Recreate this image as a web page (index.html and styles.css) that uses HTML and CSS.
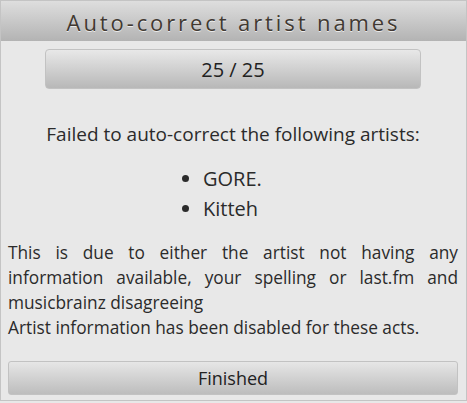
FILE: index.html
```html
<!DOCTYPE html>
<html>
<head>
<meta charset="utf-8">
<link rel="stylesheet" href="styles.css">
</head>
<body>
<div class="window">
  <div class="header">Auto-correct artist names</div>
  <div class="content">
    <div class="progress">25 / 25</div>
    <div class="failed">Failed to auto-correct the following artists:</div>
    <ul class="artists">
      <li>GORE.</li>
      <li>Kitteh</li>
    </ul>
    <p class="info">This is due to either the artist not having any information available, your spelling or last.fm and musicbrainz disagreeing<br>Artist information has been disabled for these acts.</p>
    <div class="spacer"></div>
    <div class="finished">Finished</div>
  </div>
</div>
</body>
</html>
```
FILE: styles.css
```css
html, body {
  margin: 0;
  padding: 0;
  background: #e8e8e8;
}
body {
  font-family: "Open Sans", "Noto Sans", sans-serif;
  color: #2b2b2b;
}
.window {
  width: 467px;
  height: 401px;
  box-sizing: border-box;
  border: 1px solid #c4c4c4;
  display: flex;
  flex-direction: column;
  background: #e8e8e8;
}
.header {
  height: 40px;
  flex: none;
  background: linear-gradient(#dedede, #b3b3b3);
  text-align: center;
  font-size: 22px;
  font-weight: 500;
  line-height: 42px;
  letter-spacing: 2.9px;
  color: #413932;
  text-shadow: 0 1px 0 rgba(255,255,255,0.7);
}
.content {
  flex: 1;
  display: flex;
  flex-direction: column;
  padding: 8px 8px 5px 7px;
}
.progress {
  margin: 0 37px;
  height: 38px;
  border: 1px solid #c2c2c2;
  border-radius: 4px;
  background: linear-gradient(#e8e8e8, #b8b8b8);
  text-align: center;
  font-size: 20px;
  line-height: 39px;
  color: #222;
}
.failed {
  margin-top: 32px;
  text-align: center;
  font-size: 19px;
  line-height: 26px;
}
.artists {
  margin: 17px 0 0 0;
  padding: 0 0 0 195px;
  font-size: 20px;
  line-height: 30px;
}
.info {
  margin: 16px 0 0 0;
  text-align: justify;
  font-size: 17.3px;
  line-height: 25px;
}
.spacer { flex: 1; }
.finished {
  height: 32px;
  border: 1px solid #c2c2c2;
  border-radius: 3px;
  background: linear-gradient(#e6e6e6, #bdbdbd);
  text-align: center;
  font-size: 18px;
  line-height: 33px;
  color: #222;
}
```
